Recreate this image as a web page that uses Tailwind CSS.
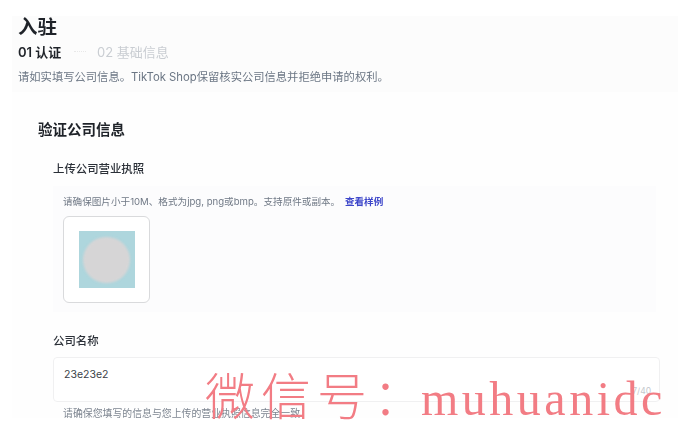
<!DOCTYPE html>
<html lang="zh-CN">

<head>
    <meta charset="UTF-8">
    <title>入驻</title>
    <script src="https://cdn.jsdelivr.net/npm/@tailwindcss/browser@4"></script>
</head>

<body class="relative h-[439px] w-[678px] overflow-hidden bg-white font-['Inter','Noto_Sans_CJK_SC',sans-serif]">
    <div class="pl-3 pt-4 blur-[0.35px]">
        <!-- Header -->
        <div class="h-[76px] bg-[#fcfcfc] pl-1.5">
            <h1 class="h-[24px] text-[19.5px] leading-[22px] font-semibold text-[#1f2329]">入驻</h1>
            <div class="flex h-[23px] items-center">
                <span class="w-[48px] text-[13px] leading-5 font-semibold text-[#1f2329]">01 认证</span>
                <span class="ml-[8px] w-[12px] border-t border-dotted border-[#e8e8e8]"></span>
                <span class="ml-[11px] text-[13px] leading-5 text-[#c9cdd2]">02 基础信息</span>
            </div>
            <p class="mt-[6px] text-[11.3px] leading-4 whitespace-nowrap text-[#6b7684]">请如实填写公司信息。TikTok Shop保留核实公司信息并拒绝申请的权利。</p>
        </div>

        <!-- Form -->
        <div class="h-[326px] bg-[#fefefe] pt-[28px] pl-[26px]">
            <h2 class="text-[14.5px] leading-5 font-semibold text-[#1f2329]">验证公司信息</h2>

            <div class="pl-[15px]">
                <h3 class="mt-[21px] text-[11.4px] leading-4 font-medium text-[#2b3038]">上传公司营业执照</h3>
                <div class="mt-[9px] h-[126px] w-[603px] bg-[#fcfcfd] pt-[9px] pl-2.5">
                    <p class="text-[9.6px] leading-[14px] whitespace-nowrap text-[#6f7885]">请确保图片小于10M、格式为jpg, png或bmp。支持原件或副本。 <span class="ml-0.5 font-semibold text-[#3d46c9]">查看样例</span></p>
                    <div class="mt-[7px] flex h-[87px] w-[87px] items-center justify-center rounded-md border border-[#d9dadc] bg-white">
                        <div class="flex h-[57px] w-[56px] items-center justify-center bg-[#aed6dd]">
                            <div class="h-[46px] w-[47px] rounded-full bg-[#d6d5d6] blur-[1px]"></div>
                        </div>
                    </div>
                </div>

                <h3 class="mt-[21px] text-[11.4px] leading-4 font-medium text-[#2b3038]">公司名称</h3>
                <div class="relative mt-2 h-[45px] w-[607px] rounded-sm border border-[#f0f0f1] bg-white pt-[9px] pl-2.5">
                    <span class="block text-[10.5px] leading-4 text-[#3a3f47]">23e23e2</span>
                    <span class="absolute right-2 bottom-1 text-[8.5px] leading-3 text-[#c4c8cd]">7/40</span>
                </div>
                <p class="mt-1 pl-2.5 text-[9.9px] leading-[14px] whitespace-nowrap text-[#7d8590]">请确保您填写的信息与您上传的营业执照信息完全一致</p>
            </div>
        </div>
    </div>

    <!-- Watermark -->
    <div class="absolute top-[368px] left-[205px] flex items-baseline font-['Liberation_Serif','Noto_Sans_CJK_SC',serif] text-[50px] leading-[60px] font-extralight tracking-[6px] whitespace-nowrap text-[#f27c84]">微信号：<span class="-ml-2 text-[48px] tracking-[3.5px]">muhuanidc</span></div>
</body>

</html>
